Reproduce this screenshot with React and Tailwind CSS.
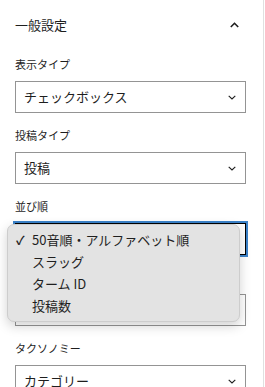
import React from 'react'

const font = { fontFamily: '"Noto Sans CJK JP", "Noto Sans", sans-serif' }

const ChevronDown = () => (
  <svg width="8" height="5" viewBox="0 0 8 5" fill="none" className="shrink-0">
    <path d="M0.7 0.8 L4 4 L7.3 0.8" stroke="#1e1e1e" strokeWidth="1.1" />
  </svg>
)

// value/label may be empty where the open menu covers them
const Field = ({ label, value, focused }) => (
  <div className="flex flex-col">
    <div className="h-[16px] text-[11px] leading-[16px] text-[#1e1e1e] mb-[9px]">{label}</div>
    <div
      className={
        focused
          ? 'h-[32px] border border-black outline-2 outline-[#3b82c9] flex items-center justify-between pl-[8px] pr-[9px] bg-white'
          : 'h-[32px] border border-[#949494] flex items-center justify-between pl-[8px] pr-[9px] bg-white'
      }
    >
      <span className="text-[13px] text-[#1e1e1e]">{value}</span>
      <ChevronDown />
    </div>
  </div>
)

const App = () => {
  const items = ['50音順・アルファベット順', 'スラッグ', 'ターム ID', '投稿数']

  return (
    <div style={font} className="relative w-[265px] h-[387px] overflow-hidden bg-white">
      <div className="w-[264px] h-full border-r border-[#e0e0e0]">
        <div className="h-[50px] flex items-center justify-between pl-[15px] pr-[24px]">
          <span className="text-[13px] text-[#1e1e1e]">一般設定</span>
          <svg width="9" height="6" viewBox="0 0 9 6" fill="none">
            <path d="M0.8 5 L4.5 1.3 L8.2 5" stroke="#1e1e1e" strokeWidth="1.6" />
          </svg>
        </div>
        <div className="pt-[6px] pl-[15px] pr-[17px] flex flex-col gap-[14px]">
          <Field label="表示タイプ" value="チェックボックス" />
          <Field label="投稿タイプ" value="投稿" />
          <Field label="並び順" value="" focused />
          <Field label="" value="" />
          <Field label="タクソノミー" value="カテゴリー" />
        </div>
      </div>

      <div className="absolute left-[7px] top-[224px] w-[233px] h-[98px] rounded-[7px] bg-[#e3e3e3] border border-[#cdcdcd] shadow-[0_4px_12px_rgba(0,0,0,0.18)] py-[4px]">
        {items.map((item, i) => (
          <div key={item} className="h-[22px] flex items-center text-[13px] text-[#1f1f1f]">
            <span className="w-[24px] pl-[8px] text-[12px] font-bold">{i === 0 ? '✓' : ''}</span>
            <span>{item}</span>
          </div>
        ))}
      </div>
    </div>
  )
}

export default App
